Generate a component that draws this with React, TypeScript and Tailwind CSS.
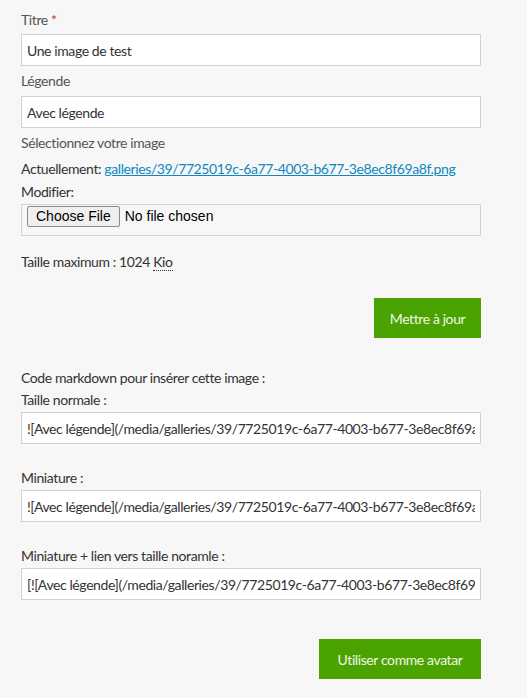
import React from 'react';

const md = '![Avec légende](/media/galleries/39/7725019c-6a77-4003-b677-3e8ec8f69a8f.png)';

function Label({ children, className = '' }: { children: React.ReactNode; className?: string }) {
  return <div className={`h-5 leading-5 text-[14px] text-[#555] ${className}`}>{children}</div>;
}

function TextField({ value, className = '' }: { value: string; className?: string }) {
  return (
    <input
      readOnly
      value={value}
      className={`block h-8 w-full border border-[#d2d2d2] bg-white px-[5px] text-[14px] tracking-[-0.4px] text-[#333] outline-none [font-family:Lato,'Open_Sans',sans-serif] ${className}`}
    />
  );
}

export default function App() {
  return (
    <div className="min-h-[698px] bg-[#f7f7f7] tracking-[-0.4px] [font-family:Lato,'Open_Sans',sans-serif]">
      <form className="flex w-[481px] flex-col pl-[21px] pt-[10px]">
        <Label>
          Titre <span className="text-[#c0392b]">*</span>
        </Label>
        <TextField value="Une image de test" className="mt-1" />

        <Label className="mt-[5px]">Légende</Label>
        <TextField value="Avec légende" className="mt-[5px]" />

        <Label className="mt-[5px]">Sélectionnez votre image</Label>
        <div className="mt-[6px] h-5 whitespace-nowrap leading-5 text-[14px] text-[#333]">
          Actuellement:{' '}
          <a href="#" className="text-[#1088bf] underline">
            galleries/39/7725019c-6a77-4003-b677-3e8ec8f69a8f.png
          </a>
        </div>
        <div className="mt-[3px] h-5 leading-5 text-[14px] text-[#333]">Modifier:</div>
        <div className="mt-[2px] flex h-8 items-start border border-[#d2d2d2] pl-[5px] pt-[1px] tracking-normal">
          <button
            type="button"
            className="h-[21px] rounded-[2px] border border-[#8a8a8a] bg-[#efefef] px-[8px] text-[14px] leading-[19px] text-black [font-family:'Liberation_Sans',Arial,sans-serif]"
          >
            Choose File
          </button>
          <span className="ml-[5px] text-[14px] leading-[21px] text-black [font-family:'Liberation_Sans',Arial,sans-serif]">
            No file chosen
          </span>
        </div>

        <div className="mt-4 h-5 leading-5 text-[14px] text-[#333]">
          Taille maximum : 1024{' '}
          <abbr title="Kibioctet" className="no-underline border-b border-dotted border-[#333]">
            Kio
          </abbr>
        </div>

        <div className="mt-[26px] flex justify-end">
          <button type="button" className="h-10 w-[107px] bg-[#4aa300] text-[14px] text-[#eef8e6]">
            Mettre à jour
          </button>
        </div>

        <div className="mt-[30px] h-5 leading-5 text-[14px] text-[#333]">Code markdown pour insérer cette image :</div>
        <div className="mt-[2px] h-5 leading-5 text-[14px] text-[#333]">Taille normale :</div>
        <TextField value={md} className="mt-[2px]" />

        <div className="mt-6 h-5 leading-5 text-[14px] text-[#333]">Miniature :</div>
        <TextField value={md} className="mt-[2px]" />

        <div className="mt-6 h-5 leading-5 text-[14px] text-[#333]">Miniature + lien vers taille noramle :</div>
        <TextField value={`[${md}](/media/galleries/39/7725019c-6a77-4003-b677-3e8ec8f69a8f.png)`} className="mt-[2px]" />

        <div className="mt-[39px] flex justify-end">
          <button type="button" className="h-10 w-[162px] bg-[#4aa300] text-[14px] text-[#eef8e6]">
            Utiliser comme avatar
          </button>
        </div>
      </form>
    </div>
  );
}
